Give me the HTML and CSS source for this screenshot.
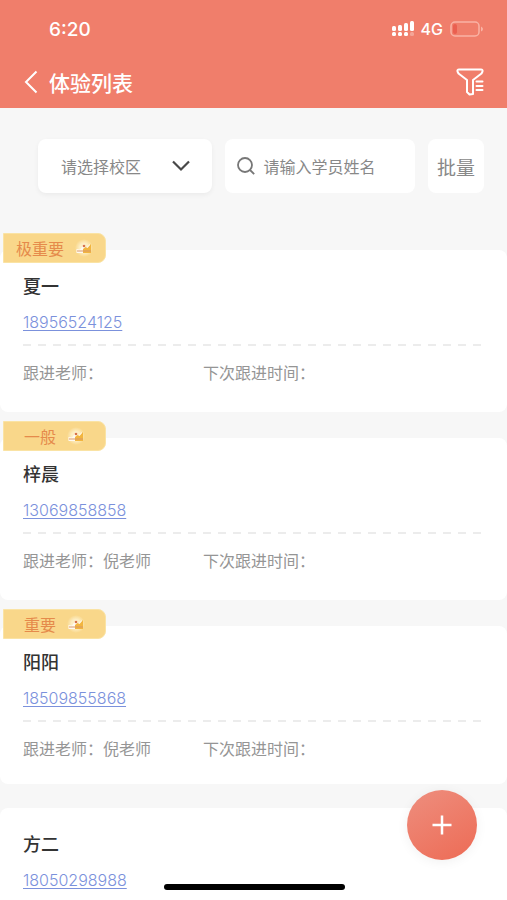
FILE: index.html
```html
<!DOCTYPE html>
<html lang="zh-CN">
<head>
<meta charset="utf-8">
<meta name="viewport" content="width=device-width, initial-scale=1">
<title>体验列表</title>
<link rel="stylesheet" href="styles.css">
</head>
<body>
<svg width="0" height="0" class="defs" aria-hidden="true">
  <radialGradient id="glow"><stop offset="0.500" stop-color="#fdeec4"/><stop offset="1" stop-color="#f9d78a"/></radialGradient>
  <symbol id="crown" viewBox="0 0 18 18">
    <circle cx="9" cy="9" r="9" fill="url(#glow)"/>
    <path d="M1.500 14V10L5 10.500L9 5L11 9L15 5V14Z" fill="#fffaf0"/>
    <path d="M8 14V10L10.500 8L12.500 9L16 5V14Z" fill="#f2b53f"/>
    <path d="M2 12H16" stroke="#d9986a" stroke-width="1"/>
    <circle cx="9" cy="7" r="1.300" fill="#d8734a"/>
  </symbol>
</svg>
<div class="app">
  <header class="header">
    <div class="status">
      <span class="time">6:20</span>
      <span class="signals">
        <svg width="22" height="16" viewBox="0 0 22 16" fill="#fff" aria-hidden="true">
          <rect x="0" y="5" width="4" height="5" rx="1.500"/><rect x="6" y="4" width="4" height="6" rx="1.500"/><rect x="12" y="2" width="4" height="8" rx="1.500"/><rect x="18" y="0" width="4" height="10" rx="1.500"/>
          <rect x="0" y="11" width="4" height="4" rx="1.500"/><rect x="6" y="11" width="4" height="4" rx="1.500"/><rect x="12" y="11" width="4" height="4" rx="1.500"/><rect x="18" y="11" width="4" height="4" rx="1.500" opacity=".3"/>
        </svg>
        <span class="network">4G</span>
        <svg width="34" height="16" viewBox="0 0 34 16" aria-hidden="true">
          <rect x="1" y="1" width="28" height="14" rx="4" fill="none" stroke="#f9b3a5" stroke-width="1.500"/>
          <rect x="3" y="3" width="4" height="10" rx="2" fill="#ea5f50"/>
          <path d="M31 5.500Q33 6.500 33 8T31 10.500Z" fill="#f9b3a5"/>
        </svg>
      </span>
    </div>
    <nav class="nav">
      <button class="icon-button" type="button" aria-label="返回">
        <svg width="14" height="24" viewBox="0 0 14 24" fill="none" stroke="#fff" stroke-width="2"><path d="M12.500 1.500L2 12L12.500 22.500"/></svg>
      </button>
      <h1 class="title">体验列表</h1>
      <button class="icon-button" type="button" aria-label="筛选">
        <svg width="28" height="28" viewBox="0 0 28 28" fill="none" stroke="#fff" stroke-width="2" stroke-linejoin="round" stroke-linecap="round">
          <path d="M3 1.500H25Q27 1.500 26.500 3.500L25.500 5.500L17 12V26L13.500 26.500L11 24V12L2.500 5.500L1.500 3.500Q1 1.500 3 1.500Z"/>
          <path d="M20.500 13.500H26.500M20.500 18H26.500M20.500 22H26.500"/>
        </svg>
      </button>
    </nav>
  </header>

  <form class="filters">
    <div class="field campus">
      <select class="control" aria-label="校区"><option>请选择校区</option></select>
      <svg class="chevron" width="18" height="12" viewBox="0 0 18 12" fill="none" stroke="#484848" stroke-width="2.200"><path d="M1 1.500L9 9.500L17 1.500"/></svg>
    </div>
    <div class="field search">
      <svg width="18" height="18" viewBox="0 0 18 18" fill="none" stroke="#777" stroke-width="1.800" aria-hidden="true"><circle cx="8" cy="8" r="7"/><path d="M13 13L17.200 17.200"/></svg>
      <input class="control" type="text" placeholder="请输入学员姓名" aria-label="学员姓名">
    </div>
    <button class="field batch" type="button">批量</button>
  </form>

  <main class="list">
    <article class="card">
      <span class="badge">极重要<svg width="18" height="18"><use href="#crown"/></svg></span>
      <h2 class="name">夏一</h2>
      <a class="phone" href="tel:18956524125">18956524125</a>
      <div class="follow"><span>跟进老师：</span><span>下次跟进时间：</span></div>
    </article>
    <article class="card">
      <span class="badge">一般<svg width="18" height="18"><use href="#crown"/></svg></span>
      <h2 class="name">梓晨</h2>
      <a class="phone" href="tel:13069858858">13069858858</a>
      <div class="follow"><span>跟进老师：倪老师</span><span>下次跟进时间：</span></div>
    </article>
    <article class="card card-short">
      <span class="badge">重要<svg width="18" height="18"><use href="#crown"/></svg></span>
      <h2 class="name">阳阳</h2>
      <a class="phone" href="tel:18509855868">18509855868</a>
      <div class="follow"><span>跟进老师：倪老师</span><span>下次跟进时间：</span></div>
    </article>
    <article class="card">
      <h2 class="name">方二</h2>
      <a class="phone" href="tel:18050298988">18050298988</a>
    </article>
  </main>

  <button class="add" type="button" aria-label="新增">
    <svg width="20" height="20" viewBox="0 0 20 20" stroke="#fff" stroke-width="2.500"><path d="M10 0.500V19.500M0.500 10H19.500"/></svg>
  </button>
  <div class="home-bar"></div>
</div>
</body>
</html>
```
FILE: styles.css
```css
* {
  box-sizing: border-box;
}

body {
  margin: 0;
  background: #f7f7f7;
  color: #333;
  font-family: "Noto Sans CJK SC", sans-serif;
  font-size: 16px;
}

button,
input,
select {
  margin: 0;
  padding: 0;
  border: 0;
  background: none;
  color: inherit;
  font: inherit;
}

svg {
  display: block;
  flex: none;
}

.defs {
  position: absolute;
}

.app {
  position: relative;
  display: flex;
  flex-direction: column;
  height: 100vh;
  overflow: hidden;
}

.header {
  flex: none;
  padding: 16px 23px 10px 24px;
  background: #f07e6b;
  color: #fff;
}

.status {
  display: flex;
  align-items: center;
  justify-content: space-between;
  height: 26px;
  padding-left: 25px;
  font-family: Inter, sans-serif;
}

.time {
  font-size: 19px;
  font-weight: 500;
}

.signals {
  display: flex;
  align-items: center;
  gap: 7px;
}

.network {
  font-size: 16px;
  font-weight: 500;
}

.nav {
  display: flex;
  align-items: center;
  gap: 11px;
  height: 32px;
  margin-top: 24px;
}

.title {
  flex: 1;
  margin: 0;
  font-size: 21px;
  font-weight: 500;
  line-height: 32px;
}

.filters {
  display: flex;
  flex: none;
  gap: 13px;
  padding: 31px 23px 57px 38px;
  color: #888;
}

.field {
  display: flex;
  align-items: center;
  height: 54px;
  border-radius: 8px;
  background: #fff;
}

.control {
  flex: 1;
  width: 100%;
  min-width: 0;
  height: 100%;
  outline: 0;
  appearance: none;
}

.control::placeholder {
  color: #888;
  opacity: 1;
}

.campus {
  position: relative;
  flex: 174 1 0;
  min-width: 0;
  box-shadow: 0 2px 5px rgba(0, 0, 0, 0.05);
}

.campus .control {
  padding: 0 48px 0 23px;
}

.chevron {
  position: absolute;
  right: 22px;
  pointer-events: none;
}

.search {
  flex: 189 1 0;
  gap: 8px;
  min-width: 0;
}

.search::before,
.search::after {
  content: "";
  width: 4px;
}

.batch {
  flex: none;
  justify-content: center;
  width: 56px;
  font-size: 19px;
}

.list {
  flex: 1;
  min-height: 0;
}

.card {
  position: relative;
  margin-bottom: 26px;
  padding: 21px 22px 28px 23px;
  border-radius: 8px;
  background: #fff;
}

.card-short {
  margin-bottom: 24px;
  padding-bottom: 24px;
}

.badge {
  position: absolute;
  top: -17px;
  left: 3px;
  display: flex;
  align-items: center;
  justify-content: center;
  gap: 11px;
  width: 103px;
  height: 30px;
  border: 1px solid #fae3a4;
  border-radius: 0 8px 8px 0;
  background: #f9d78a;
  color: #e58a4b;
}

.name {
  margin: 0;
  font-size: 18px;
  font-weight: 500;
  line-height: 28px;
}

.phone {
  display: block;
  width: fit-content;
  margin-top: 11px;
  color: #7b91dc;
  font-family: Inter, sans-serif;
  font-size: 16px;
  font-weight: 300;
  line-height: 24px;
  text-underline-offset: 2px;
}

.follow {
  display: grid;
  grid-template-columns: 180px 1fr;
  margin-top: 10px;
  padding-top: 16px;
  background: repeating-linear-gradient(90deg, #ececec 0 8px, transparent 8px 15px) top / 100% 2px no-repeat;
  color: #959595;
  line-height: 24px;
}

.add {
  position: absolute;
  right: 30px;
  bottom: 40px;
  display: flex;
  align-items: center;
  justify-content: center;
  width: 70px;
  height: 70px;
  border-radius: 50%;
  background: linear-gradient(150deg, #ee8e7e, #ed6b55);
  box-shadow: 0 2px 12px rgba(0, 0, 0, 0.06);
}

.home-bar {
  position: absolute;
  bottom: 10px;
  left: 50%;
  width: 181px;
  height: 6px;
  margin-left: -90px;
  border-radius: 3px;
  background: #000;
}
```
